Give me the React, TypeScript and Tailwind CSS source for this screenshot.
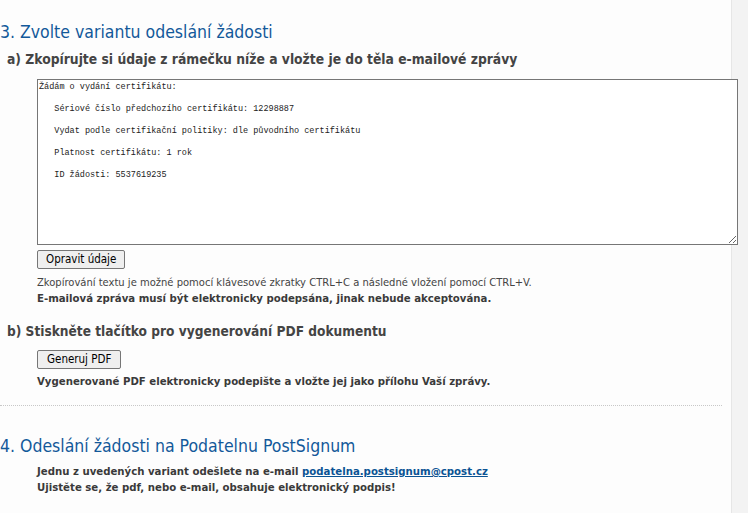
const requestText = `Žádám o vydání certifikátu:

   Sériové číslo předchozího certifikátu: 12298887

   Vydat podle certifikační politiky: dle původního certifikátu

   Platnost certifikátu: 1 rok

   ID žádosti: 5537619235`;

export default function App() {
  return (
    <div className="flex h-[513px] w-full overflow-hidden bg-[#fdfdfd] font-['DejaVu_Sans_Condensed',Tahoma,sans-serif] text-[#444]">
      <div className="min-w-0 flex-1">
        {/* sekce 3 */}
        <h2 className="mt-[22px] text-[17.5px] leading-[20px] text-[#13599a]">
          3. Zvolte variantu odeslání žádosti
        </h2>

        <h3 className="mt-[8px] ml-[7px] text-[13.75px] leading-[18px] font-bold text-[#444]">
          a) Zkopírujte si údaje z rámečku níže a vložte je do těla e-mailové zprávy
        </h3>

        <textarea
          readOnly
          defaultValue={requestText}
          className="relative z-10 mt-[11px] ml-[37px] block h-[166px] w-[701px] border border-[#767676] bg-white px-[1px] py-[2px] font-['Liberation_Mono',monospace] text-[8.5px] leading-[11px] text-[#222] outline-none"
        />

        <div className="ml-[37px]">
          <button className="mt-[5px] block h-[19px] rounded-[2px] border border-[#767676] bg-[#efefef] px-[8px] text-[11.5px] leading-[17px] text-black">
            Opravit údaje
          </button>

          <p className="mt-[6px] text-[11.1px] leading-[16px]">
            Zkopírování textu je možné pomocí klávesové zkratky CTRL+C a následné vložení pomocí CTRL+V.
          </p>
          <p className="text-[11.3px] leading-[16px] font-bold text-[#3a3a3a]">
            E-mailová zpráva musí být elektronicky podepsána, jinak nebude akceptována.
          </p>
        </div>

        <h3 className="mt-[15px] ml-[7px] text-[13.6px] leading-[18px] font-bold text-[#444]">
          b) Stiskněte tlačítko pro vygenerování PDF dokumentu
        </h3>

        <div className="ml-[37px]">
          <button className="mt-[10px] block h-[19px] rounded-[2px] border border-[#767676] bg-[#efefef] px-[9px] text-[11.5px] leading-[17px] text-black">
            Generuj PDF
          </button>
          <p className="mt-[5px] text-[11.3px] leading-[16px] font-bold text-[#3a3a3a]">
            Vygenerované PDF elektronicky podepište a vložte jej jako přílohu Vaší zprávy.
          </p>
        </div>

        <div className="mt-[15px] w-[722px] border-t border-dotted border-[#c8c8c8]" />

        {/* sekce 4 */}
        <h2 className="mt-[30px] text-[17.5px] leading-[20px] text-[#13599a]">
          4. Odeslání žádosti na Podatelnu PostSignum
        </h2>

        <div className="mt-[8px] ml-[37px] text-[11.3px] leading-[16px] font-bold text-[#3a3a3a]">
          <p>
            Jednu z uvedených variant odešlete na e-mail{" "}
            <a href="#" className="text-[#0b5394] underline">
              podatelna.postsignum@cpost.cz
            </a>
          </p>
          <p>Ujistěte se, že pdf, nebo e-mail, obsahuje elektronický podpis!</p>
        </div>
      </div>

      <div className="w-[17px] shrink-0 border-l border-[#e6e6e6] bg-[#f3f3f3]" />
    </div>
  );
}
